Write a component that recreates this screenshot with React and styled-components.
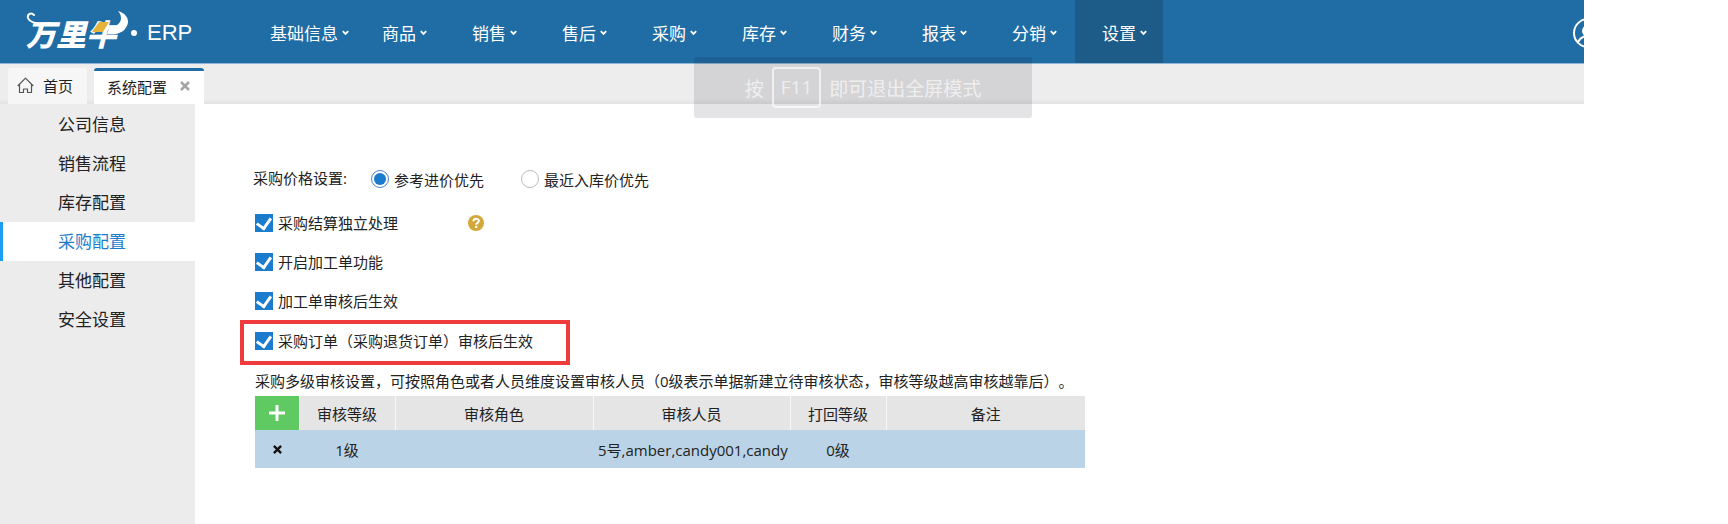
import React, { useState } from 'react';
import styled, { createGlobalStyle } from 'styled-components';

const menus = ['基础信息', '商品', '销售', '售后', '采购', '库存', '财务', '报表', '分销', '设置'];
const sections = ['公司信息', '销售流程', '库存配置', '采购配置', '其他配置', '安全设置'];
const options = [
  { id: 'settle', label: '采购结算独立处理', help: true },
  { id: 'process', label: '开启加工单功能' },
  { id: 'processAudit', label: '加工单审核后生效' },
  { id: 'orderAudit', label: '采购订单（采购退货订单）审核后生效', marked: true },
];
const rows = [{ level: '1级', role: '', users: '5号,amber,candy001,candy', back: '0级', remark: '' }];

const App = () => {
  const [section, setSection] = useState('采购配置');

  return (
    <Page>
      <GlobalStyle />
      <Header>
        <Logo />
        <Nav>
          {menus.map(name => (
            <NavItem key={name} $wide={name.length > 2} $active={name === '设置'}>
              {name}
              <Chevron />
            </NavItem>
          ))}
        </Nav>
        <UserButton aria-label="user">
          <UserIcon />
        </UserButton>
      </Header>
      <TabBar>
        <HomeTab>
          <HomeIcon />
          首页
        </HomeTab>
        <ActiveTab>
          系统配置
          <CloseTab aria-label="close">
            <CrossIcon size={10} color="#a5a5a5" />
          </CloseTab>
        </ActiveTab>
      </TabBar>
      <Body>
        <Sidebar>
          {sections.map(name => (
            <SideItem key={name} $active={name === section} onClick={() => setSection(name)}>
              {name}
            </SideItem>
          ))}
        </Sidebar>
        <Main>
          <PriceRow>
            <PriceLabel>采购价格设置:</PriceLabel>
            <RadioLabel>
              <Radio name="price" defaultChecked />
              参考进价优先
            </RadioLabel>
            <RadioLabel>
              <Radio name="price" />
              最近入库价优先
            </RadioLabel>
          </PriceRow>
          {options.map(({ id, label, help, marked }) => (
            <OptionRow key={id} $marked={marked}>
              <CheckLabel $wide={help}>
                <Checkbox id={id} defaultChecked />
                {label}
              </CheckLabel>
              {help && <HelpIcon />}
            </OptionRow>
          ))}
          <Note>
            采购多级审核设置，可按照角色或者人员维度设置审核人员（0级表示单据新建立待审核状态，审核等级越高审核越靠后）。
          </Note>
          <AuditTable />
        </Main>
      </Body>
      <FullscreenTip>
        按<Key>F11</Key>即可退出全屏模式
      </FullscreenTip>
    </Page>
  );
};

const AuditTable = () => (
  <Table>
    <colgroup>
      <Col $width={44} />
      <Col $width={96} />
      <Col $width={198} />
      <Col $width={197} />
      <Col $width={96} />
      <Col $width={199} />
    </colgroup>
    <thead>
      <tr>
        <AddCell>
          <AddButton aria-label="add">
            <svg width="16" height="16" viewBox="0 0 16 16">
              <path d="M8 0v16M0 8h16" stroke="#fff" strokeWidth="3" />
            </svg>
          </AddButton>
        </AddCell>
        <Th>审核等级</Th>
        <Th>审核角色</Th>
        <Th>审核人员</Th>
        <Th>打回等级</Th>
        <Th>备注</Th>
      </tr>
    </thead>
    <tbody>
      {rows.map(row => (
        <tr key={row.level}>
          <Td>
            <RemoveButton aria-label="remove">
              <CrossIcon size={9} color="#111" />
            </RemoveButton>
          </Td>
          <Td>{row.level}</Td>
          <Td>{row.role}</Td>
          <Td $left>{row.users}</Td>
          <Td>{row.back}</Td>
          <Td>{row.remark}</Td>
        </tr>
      ))}
    </tbody>
  </Table>
);

const Logo = () => (
  <LogoLink href="#">
    <Brand>
      万里牛
      <BrandHorns viewBox="0 0 106 38">
        <path
          d="M26 9C16 11 6 9 4 4C3 0 7 -2 10 1"
          fill="none"
          stroke="#fff"
          strokeWidth="2"
          strokeLinecap="round"
        />
        <path d="M94 -3C104 0 107 8 101 15C98 19 92 21 83 20L85 14C95 13 101 5 94 -3Z" fill="#fff" />
        <path d="M75 8h10l-6 10h-11Z" fill="#e6b23c" />
      </BrandHorns>
    </Brand>
    <Dot />
    ERP
  </LogoLink>
);

const Chevron = () => (
  <svg width="7" height="6" viewBox="0 0 7 6">
    <path d="M0.8 1.2l2.7 2.7 2.7-2.7" fill="none" stroke="#fff" strokeWidth="1.8" />
  </svg>
);

const CrossIcon = ({ size, color }) => (
  <svg width={size} height={size} viewBox="0 0 10 10">
    <path d="M1 1l8 8M9 1L1 9" stroke={color} strokeWidth="2.6" />
  </svg>
);

const HomeIcon = () => (
  <svg width="17" height="17" viewBox="0 0 17 17">
    <path
      d="M0.7 9L8.5 1.2L16.3 9M2.5 7.5V15.5H6.5V12H10.5V15.5H14.5V7.5"
      fill="none"
      stroke="#555"
      strokeWidth="1.2"
      strokeLinejoin="round"
    />
  </svg>
);

const UserIcon = () => (
  <svg width="30" height="30" viewBox="0 0 30 30">
    <g fill="none" stroke="#fff" strokeWidth="2">
      <circle cx="15" cy="15" r="14" />
      <circle cx="15" cy="13" r="5" />
      <path d="M5 24C7 20 10 18 15 18s8 2 10 6" />
    </g>
  </svg>
);

const HelpIcon = () => (
  <svg width="16" height="16" viewBox="0 0 16 16">
    <circle cx="8" cy="8" r="8" fill="#d3a73a" />
    <path
      d="M5.4 6.3C5.4 3 10.8 3 10.8 6C10.8 7.9 8.2 7.7 8.2 9.7"
      fill="none"
      stroke="#fff"
      strokeWidth="2"
    />
    <rect x="7" y="10.8" width="2.3" height="2.2" fill="#fff" />
  </svg>
);

const GlobalStyle = createGlobalStyle`
  * {
    box-sizing: border-box;
  }
  body {
    margin: 0;
    background: #fff;
    color: #222;
    font-family: 'Open Sans', 'Noto Sans CJK SC', sans-serif;
    font-size: 15px;
    text-spacing-trim: space-all;
  }
  button {
    padding: 0;
    border: 0;
    background: none;
    color: inherit;
    font: inherit;
    cursor: pointer;
  }
  svg {
    display: block;
    flex: none;
  }
`;

const Page = styled.div`
  display: flex;
  flex-direction: column;
  min-height: 100vh;
  padding-right: 144px;
`;

const Header = styled.header`
  display: flex;
  align-items: center;
  height: 64px;
  overflow: hidden;
  border-bottom: 1px solid #8fb5d2;
  background: #206ca5;
  color: #fff;
`;

const LogoLink = styled.a`
  display: flex;
  align-items: center;
  width: 243px;
  padding: 2px 0 0 24px;
  color: #fff;
  font-family: 'Liberation Sans', sans-serif;
  font-size: 22px;
  text-decoration: none;
`;

const Brand = styled.span`
  position: relative;
  width: 106px;
  padding-left: 2px;
  font-family: 'Noto Sans CJK SC', sans-serif;
  font-size: 30px;
  font-style: italic;
  font-weight: 900;
  line-height: 38px;
`;

const BrandHorns = styled.svg`
  position: absolute;
  top: 0;
  left: 0;
  width: 106px;
  height: 38px;
  overflow: visible;
`;

const Dot = styled.span`
  width: 6px;
  height: 6px;
  margin: 0 10px 0 1px;
  border-radius: 50%;
  background: #fff;
`;

const Nav = styled.nav`
  display: flex;
  gap: 2px;
  height: 100%;
`;

const NavItem = styled.button`
  display: flex;
  align-items: center;
  gap: 4px;
  width: ${props => (props.$wide ? 110 : 88)}px;
  padding: 2px 0 0 27px;
  background: ${props => (props.$active ? '#1d5b88' : 'transparent')};
  font-size: 17px;
  white-space: nowrap;
  &:hover {
    background: #1d5b88;
  }
`;

const UserButton = styled.button`
  margin: 2px -19px 0 auto;
`;

const TabBar = styled.div`
  display: flex;
  align-items: flex-end;
  gap: 7px;
  height: 40px;
  padding-left: 8px;
  background: linear-gradient(#ededed 35px, #e2e2e2);
`;

const HomeTab = styled.button`
  display: flex;
  align-items: center;
  gap: 9px;
  height: 36px;
  width: 79px;
  padding: 0 0 2px 9px;
  border-radius: 3px 3px 0 0;
  background: #f6f6f6;
`;

const ActiveTab = styled.div`
  display: flex;
  align-items: center;
  gap: 13px;
  width: 110px;
  height: 36px;
  padding: 0 0 3px 13px;
  border-top: 3px solid #206ca5;
  border-radius: 3px 3px 0 0;
  background: #fff;
`;

const CloseTab = styled.button`
  display: flex;
`;

const Body = styled.div`
  display: flex;
  flex: 1;
`;

const Sidebar = styled.aside`
  display: flex;
  flex-direction: column;
  flex: none;
  width: 195px;
  padding-top: 1px;
  background: #ececec;
`;

const SideItem = styled.button`
  height: 39px;
  padding: 0 0 2px 55px;
  border-left: 3px solid ${props => (props.$active ? '#1a9ff0' : 'transparent')};
  background: ${props => (props.$active ? '#fff' : 'transparent')};
  color: ${props => (props.$active ? '#1f7ccc' : '#222')};
  font-size: 17px;
  text-align: left;
`;

const Main = styled.main`
  flex: 1;
  padding: 51px 0 56px 60px;
`;

const PriceRow = styled.div`
  display: flex;
  align-items: center;
  height: 48px;
`;

const PriceLabel = styled.span`
  width: 118px;
  margin-left: -2px;
  padding-bottom: 3px;
`;

const RadioLabel = styled.label`
  display: flex;
  align-items: center;
  gap: 5px;
  width: 150px;
  white-space: nowrap;
`;

const Radio = styled.input.attrs({ type: 'radio' })`
  display: grid;
  place-items: center;
  width: 18px;
  height: 18px;
  margin: 0;
  appearance: none;
  border: 1px solid #bbb;
  border-radius: 50%;
  background: #fff;
  &:checked {
    border-color: #4a86d0;
  }
  &:checked::before {
    content: '';
    width: 12px;
    height: 12px;
    border-radius: 50%;
    background: #1b7bcc;
  }
`;

const OptionRow = styled.div`
  display: flex;
  align-items: center;
  height: 39px;
  ${props =>
    props.$marked &&
    `
    width: 330px;
    height: 45px;
    margin-left: -15px;
    padding: 0 0 4px 11px;
    border: 4px solid #ef3b3b;
  `}
`;

const CheckLabel = styled.label`
  display: flex;
  align-items: center;
  gap: 5px;
  width: ${props => (props.$wide ? '213px' : 'auto')};
  white-space: nowrap;
`;

const Checkbox = styled.input.attrs({ type: 'checkbox' })`
  display: grid;
  place-items: center;
  width: 18px;
  height: 18px;
  margin: 0;
  appearance: none;
  border: 1px solid #1b7bcc;
  background: #fff;
  &:checked {
    background: #1b7bcc;
  }
  &:checked::before {
    content: '';
    width: 7px;
    height: 11px;
    margin-bottom: 4px;
    border: solid #fff;
    border-width: 0 3px 3px 0;
    transform: rotate(35deg);
  }
`;

const Note = styled.p`
  margin: 0;
  padding: 2px 0 1px;
  line-height: 28px;
`;

const Table = styled.table`
  width: 830px;
  max-width: 100%;
  table-layout: fixed;
  border-collapse: collapse;
`;

const Col = styled.col`
  width: ${props => props.$width}px;
`;

const Th = styled.th`
  height: 34px;
  padding: 0;
  border-right: 1px solid #f8f8f8;
  background: #e5e5e5;
  font-weight: 400;
  &:last-child {
    border-right: 0;
  }
`;

const AddCell = styled(Th)`
  background: #60ca62;
`;

const AddButton = styled.button`
  display: grid;
  place-items: center;
  width: 100%;
  height: 34px;
`;

const Td = styled.td`
  height: 38px;
  padding: ${props => (props.$left ? '0 0 0 5px' : 0)};
  background: #bbd3e6;
  text-align: ${props => (props.$left ? 'left' : 'center')};
  white-space: nowrap;
`;

const RemoveButton = styled.button`
  display: grid;
  place-items: center;
  width: 100%;
  height: 38px;
`;

const FullscreenTip = styled.div`
  position: absolute;
  top: 57px;
  left: 50%;
  display: flex;
  align-items: center;
  justify-content: center;
  gap: 8px;
  width: 338px;
  height: 61px;
  margin-left: -170px;
  border-radius: 3px;
  background: rgba(10, 10, 25, 0.11);
  color: rgba(255, 255, 255, 0.65);
  font-size: 19px;
`;

const Key = styled.kbd`
  padding: 0 7px;
  border: 2px solid rgba(255, 255, 255, 0.65);
  border-radius: 4px;
  font-family: inherit;
  line-height: 37px;
`;

export default App;
